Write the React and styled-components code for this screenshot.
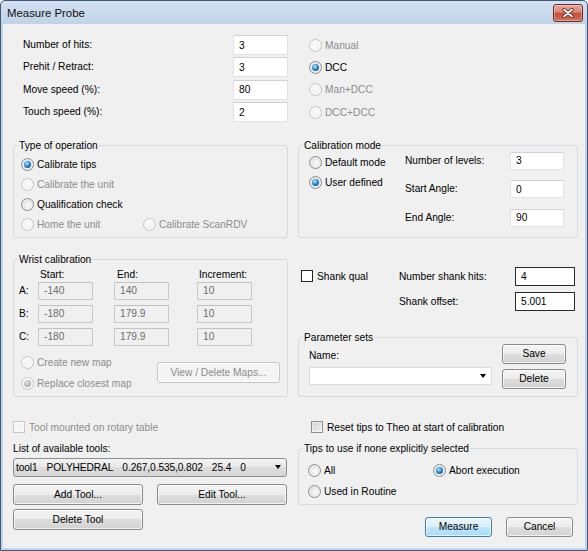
import React from 'react';
import styled, { createGlobalStyle } from 'styled-components';

const GlobalStyle = createGlobalStyle`
  html, body {
    margin: 0;
    padding: 0;
    background: #ffffff;
  }
  body {
    font-family: "Liberation Sans", Arial, sans-serif;
    font-size: 10.2px;
    color: #000;
  }
  * {
    box-sizing: border-box;
  }
`;

const Window = styled.div`
  width: 588px;
  height: 551px;
  display: flex;
  flex-direction: column;
  border: 1px solid #3f5775;
  border-radius: 5px 5px 0 0;
  background: linear-gradient(#d3e1f1, #bfd2e8 24px, #c3d5ea);
  overflow: hidden;
`;

const TitleBar = styled.div`
  height: 23px;
  flex: none;
  display: flex;
  align-items: center;
  justify-content: space-between;
  padding: 0 4px 0 6px;
`;

const Title = styled.span`
  font-size: 11.4px;
  color: #111;
`;

const CloseButton = styled.div`
  width: 30px;
  height: 18px;
  margin-top: 1px;
  border: 1px solid #6e2a22;
  border-radius: 3px;
  background: linear-gradient(#eaa99d, #d98474 45%, #c44e38 52%, #d3735a);
  box-shadow: inset 0 0 0 1px rgba(255, 255, 255, 0.35);
  display: flex;
  align-items: center;
  justify-content: center;
`;

const Body = styled.div`
  flex: 1;
  margin: 0 2px 2px;
  background: #f0f0f0;
  padding: 11px 0 0 10px;
`;

const TopSection = styled.div`
  display: grid;
  grid-template-columns: 210px 55px auto;
  grid-auto-rows: 20px;
  row-gap: 2.4px;
  align-items: center;
  padding-left: 10px;
`;

const ModeCell = styled.div`
  margin-left: 21px;
`;

const Label = styled.span`
  line-height: ${p => p.$lh || 14}px;
  white-space: nowrap;
  color: ${p => (p.$disabled ? '#8d8d8d' : '#000')};
  padding-left: ${p => p.$indent || 0}px;
`;

const Row = styled.div`
  display: grid;
  grid-template-columns: 275px 280px;
  column-gap: 10px;
  align-items: stretch;
  margin-top: ${p => p.$gap}px;
`;

const Group = styled.fieldset`
  margin: 0;
  padding: 0;
  min-width: 0;
  border: 1px solid #d5dbe0;
  border-radius: 3px;
  margin-top: ${p => p.$top || 0}px;
`;

const Legend = styled.legend`
  margin-left: 4px;
  padding: 0 1px;
  line-height: 12px;
`;

const TypeBody = styled.div`
  padding: 3px 0 2px 7px;
`;

const InlineRadios = styled.div`
  display: grid;
  grid-template-columns: ${p => p.$first}px auto;
`;

const CalibBody = styled.div`
  display: grid;
  grid-template-columns: 96px 105px 54px;
  grid-template-rows: repeat(3, 18px);
  row-gap: 10.5px;
  padding: 0 0 9px 10px;
`;

const RadioColumn = styled.div`
  grid-row: 1 / span 3;
  padding-top: 1px;
`;

const RadioRow = styled.div`
  display: flex;
  align-items: center;
  gap: 3px;
  height: ${p => p.$h || 20}px;
  white-space: nowrap;
  color: ${p => (p.$disabled ? '#8d8d8d' : '#000')};
`;

const RadioDot = styled.span`
  width: 13px;
  height: 13px;
  flex: none;
  border-radius: 50%;
  border: 1px solid ${p => (p.$disabled ? '#c5c5c5' : '#8a8b8c')};
  background: ${p =>
    p.$disabled
      ? 'radial-gradient(circle at 50% 40%, #fafafa, #ececec)'
      : 'radial-gradient(circle at 55% 55%, #f6f6f6 20%, #dadada 70%, #c9c9c9)'};
  box-shadow: inset 0 0 0 1px rgba(255, 255, 255, 0.6);
  display: flex;
  align-items: center;
  justify-content: center;
  &::after {
    content: '';
    display: ${p => (p.$checked ? 'block' : 'none')};
    width: 7px;
    height: 7px;
    border-radius: 50%;
    background: ${p =>
      p.$disabled
        ? 'radial-gradient(circle at 40% 35%, #e6e6e6, #a9a9a9 70%)'
        : 'radial-gradient(circle at 40% 35%, #b5e6fd, #2f8fd6 45%, #0a4a87 85%)'};
  }
`;

const CheckRow = styled.div`
  display: flex;
  align-items: center;
  gap: 4px;
  height: 13px;
  padding-left: ${p => p.$indent || 0}px;
  white-space: nowrap;
  color: ${p => (p.$disabled ? '#8d8d8d' : '#000')};
`;

const CheckBox = styled.span`
  width: 12px;
  height: 12px;
  flex: none;
  border: 1px solid
    ${p => (p.$variant === 'dark' ? '#222' : p.$variant === 'disabled' ? '#c8c8c8' : '#8e8f8f')};
  background: ${p =>
    p.$variant === 'dark'
      ? '#fff'
      : p.$variant === 'disabled'
      ? '#f4f4f4'
      : 'linear-gradient(135deg, #d2d2d2, #f0f0f0)'};
  box-shadow: ${p => (p.$variant === 'dark' ? 'none' : 'inset 0 0 0 1px rgba(255,255,255,0.5)')};
`;

const TextBox = styled.input`
  width: ${p => p.$w}px;
  height: ${p => p.$h}px;
  padding: 0 5px;
  margin: 0;
  font: inherit;
  outline: none;
  color: ${p => (p.$variant === 'disabled' ? '#6d6d6d' : '#000')};
  background: ${p => (p.$variant === 'disabled' ? '#f0f0f0' : '#fff')};
  border: 1px solid
    ${p => (p.$variant === 'dark' ? '#2a2a2a' : p.$variant === 'disabled' ? '#c9c9c9' : '#e0e3e8')};
  border-top-color: ${p =>
    p.$variant === 'dark' ? '#2a2a2a' : p.$variant === 'disabled' ? '#c2c2c2' : '#cfd2d8'};
`;

const Button = styled.button`
  width: ${p => p.$w}px;
  height: ${p => p.$h || 20}px;
  margin: 0;
  margin-left: ${p => p.$left || 0}px;
  margin-top: ${p => p.$top || 0}px;
  padding: 0;
  font: inherit;
  flex: none;
  border-radius: 3px;
  color: ${p => (p.$variant === 'disabled' ? '#8d8d8d' : '#000')};
  border: 1px solid
    ${p => (p.$variant === 'primary' ? '#3c7fb1' : p.$variant === 'disabled' ? '#c3c6c9' : '#8a8a8a')};
  background: ${p =>
    p.$variant === 'primary'
      ? 'linear-gradient(#eaf6fd, #d9f0fc 50%, #bee6fd 50%, #a9dbf6)'
      : p.$variant === 'disabled'
      ? '#f4f4f4'
      : 'linear-gradient(#f4f4f4, #ececec 50%, #dedede 50%, #d2d2d2)'};
  box-shadow: inset 0 0 0 1px rgba(255, 255, 255, 0.7);
`;

const Combo = styled.div`
  width: ${p => p.$w}px;
  height: ${p => p.$h}px;
  margin-top: ${p => p.$top || 0}px;
  display: flex;
  align-items: center;
  padding: 0 5px 0 2px;
  border-radius: ${p => (p.$raised ? 3 : 0)}px;
  border: 1px solid ${p => (p.$raised ? '#8d8d8d' : '#dcdcdc')};
  background: ${p => (p.$raised ? 'linear-gradient(#f3f3f3, #e8e8e8 50%, #dddddd 50%, #d6d6d6)' : '#fff')};
`;

const ComboText = styled.div`
  display: flex;
  gap: 9px;
  white-space: nowrap;
  letter-spacing: -0.1px;
`;

const Arrow = styled.span`
  margin-left: auto;
  width: 0;
  height: 0;
  border-left: 3.5px solid transparent;
  border-right: 3.5px solid transparent;
  border-top: 4px solid #000;
`;

const WristBody = styled.div`
  padding: 1px 0 2px 5px;
`;

const WristGrid = styled.div`
  display: grid;
  grid-template-columns: 19px 76px 83px 55px;
  grid-template-rows: 15px 23px 23px 18px;
  align-items: start;
`;

const MapSection = styled.div`
  display: flex;
  margin: 6px 0 0 2px;
`;

const MapRadios = styled.div`
  width: 136px;
`;

const ShankGrid = styled.div`
  display: grid;
  grid-template-columns: 98px 116px 60px;
  grid-template-rows: 19px 19px;
  row-gap: 6px;
  padding: 13px 0 0 3px;
  align-items: center;
`;

const RightStack = styled.div`
  display: flex;
  flex-direction: column;
`;

const ParamBody = styled.div`
  display: flex;
  gap: 10px;
  padding: 0 0 7px 10px;
`;

const Column = styled.div`
  display: flex;
  flex-direction: column;
  margin-top: ${p => p.$top || 0}px;
`;

const ButtonRow = styled.div`
  display: flex;
  justify-content: ${p => (p.$end ? 'flex-end' : 'flex-start')};
  gap: ${p => p.$gap || 0}px;
  margin-top: ${p => p.$top || 0}px;
  padding-right: ${p => p.$right || 0}px;
`;

const TipsBody = styled.div`
  display: grid;
  grid-template-columns: 125px auto;
  grid-auto-rows: 21px;
  padding: 5px 0 2px 9px;
`;

const Radio = ({ checked, disabled, h, children }) => (
  <RadioRow $disabled={disabled} $h={h}>
    <RadioDot $checked={checked} $disabled={disabled} />
    <span>{children}</span>
  </RadioRow>
);

const Check = ({ variant, indent, children }) => (
  <CheckRow $disabled={variant === 'disabled'} $indent={indent}>
    <CheckBox $variant={variant} />
    <span>{children}</span>
  </CheckRow>
);

const topFields = [
  ['Number of hits:', '3', 'Manual', false, true],
  ['Prehit / Retract:', '3', 'DCC', true, false],
  ['Move speed (%):', '80', 'Man+DCC', false, true],
  ['Touch speed (%):', '2', 'DCC+DCC', false, true],
];

const wristRows = [
  ['A:', '-140', '140', '10'],
  ['B:', '-180', '179.9', '10'],
  ['C:', '-180', '179.9', '10'],
];

const toolColumns = ['tool1', 'POLYHEDRAL', '0.267,0.535,0.802', '25.4', '0'];

const App = () => {
  return (
    <>
      <GlobalStyle />
      <Window>
        <TitleBar>
          <Title>Measure Probe</Title>
          <CloseButton>
            <svg width="12" height="10" viewBox="0 0 12 10">
              <path d="M2 1.5 L10 8.5 M10 1.5 L2 8.5" stroke="#4a1d17" strokeWidth="3.4" strokeLinecap="round" />
              <path d="M2 1.5 L10 8.5 M10 1.5 L2 8.5" stroke="#fff" strokeWidth="1.8" strokeLinecap="round" />
            </svg>
          </CloseButton>
        </TitleBar>
        <Body>
          <TopSection>
            {topFields.map(([label, value, mode, checked, disabled]) => (
              <React.Fragment key={label}>
                <Label>{label}</Label>
                <TextBox $w={55} $h={20} defaultValue={value} />
                <ModeCell>
                  <Radio checked={checked} disabled={disabled}>{mode}</Radio>
                </ModeCell>
              </React.Fragment>
            ))}
          </TopSection>

          <Row $gap={17.8}>
            <Group>
              <Legend>Type of operation</Legend>
              <TypeBody>
                <Radio checked>Calibrate tips</Radio>
                <Radio disabled>Calibrate the unit</Radio>
                <Radio>Qualification check</Radio>
                <InlineRadios $first={122}>
                  <Radio disabled>Home the unit</Radio>
                  <Radio disabled>Calibrate ScanRDV</Radio>
                </InlineRadios>
              </TypeBody>
            </Group>
            <Group>
              <Legend>Calibration mode</Legend>
              <CalibBody>
                <RadioColumn>
                  <Radio>Default mode</Radio>
                  <Radio checked>User defined</Radio>
                </RadioColumn>
                <Label $lh={18}>Number of levels:</Label>
                <TextBox $w={54} $h={18} defaultValue="3" />
                <Label $lh={18}>Start Angle:</Label>
                <TextBox $w={54} $h={18} defaultValue="0" />
                <Label $lh={18}>End Angle:</Label>
                <TextBox $w={54} $h={18} defaultValue="90" />
              </CalibBody>
            </Group>
          </Row>

          <Row $gap={16}>
            <Group>
              <Legend>Wrist calibration</Legend>
              <WristBody>
                <WristGrid>
                  <span />
                  <Label $lh={15} $indent={2}>Start:</Label>
                  <Label $lh={15} $indent={3}>End:</Label>
                  <Label $lh={15} $indent={2}>Increment:</Label>
                  {wristRows.map(([axis, start, end, inc]) => (
                    <React.Fragment key={axis}>
                      <Label $lh={18}>{axis}</Label>
                      <TextBox $w={55} $h={18} $variant="disabled" defaultValue={start} disabled />
                      <TextBox $w={55} $h={18} $variant="disabled" defaultValue={end} disabled />
                      <TextBox $w={55} $h={18} $variant="disabled" defaultValue={inc} disabled />
                    </React.Fragment>
                  ))}
                </WristGrid>
                <MapSection>
                  <MapRadios>
                    <Radio disabled h={21}>Create new map</Radio>
                    <Radio disabled checked h={21}>Replace closest map</Radio>
                  </MapRadios>
                  <Button $w={123} $h={21} $top={10} $variant="disabled">
                    View / Delete Maps...
                  </Button>
                </MapSection>
              </WristBody>
            </Group>
            <RightStack>
              <ShankGrid>
                <Check variant="dark">Shank qual</Check>
                <Label $lh={19}>Number shank hits:</Label>
                <TextBox $w={60} $h={19} $variant="dark" defaultValue="4" />
                <span />
                <Label $lh={19}>Shank offset:</Label>
                <TextBox $w={60} $h={19} $variant="dark" defaultValue="5.001" />
              </ShankGrid>
              <Group $top={21}>
                <Legend>Parameter sets</Legend>
                <ParamBody>
                  <Column $top={5}>
                    <Label>Name:</Label>
                    <Combo $w={183} $h={18} $top={4}>
                      <Arrow />
                    </Combo>
                  </Column>
                  <Column>
                    <Button $w={64}>Save</Button>
                    <Button $w={64} $top={5}>Delete</Button>
                  </Column>
                </ParamBody>
              </Group>
            </RightStack>
          </Row>

          <Row $gap={24}>
            <Column>
              <Check variant="disabled">Tool mounted on rotary table</Check>
              <Column $top={8}>
                <Label>List of available tools:</Label>
              </Column>
              <Combo $w={274} $h={19} $top={2} $raised>
                <ComboText>
                  {toolColumns.map(c => (
                    <span key={c}>{c}</span>
                  ))}
                </ComboText>
                <Arrow />
              </Combo>
              <ButtonRow $top={7}>
                <Button $w={130} $h={21}>Add Tool...</Button>
                <Button $w={130} $h={21} $left={14}>Edit Tool...</Button>
              </ButtonRow>
              <ButtonRow $top={4}>
                <Button $w={130} $h={21}>Delete Tool</Button>
              </ButtonRow>
            </Column>
            <Column>
              <Check indent={13}>Reset tips to Theo at start of calibration</Check>
              <Group $top={9}>
                <Legend>Tips to use if none explicitly selected</Legend>
                <TipsBody>
                  <Radio h={21}>All</Radio>
                  <Radio checked h={21}>Abort execution</Radio>
                  <Radio h={21}>Used in Routine</Radio>
                </TipsBody>
              </Group>
              <ButtonRow $end $gap={14} $top={12} $right={5}>
                <Button $w={67} $variant="primary">Measure</Button>
                <Button $w={67}>Cancel</Button>
              </ButtonRow>
            </Column>
          </Row>
        </Body>
      </Window>
    </>
  );
};

export default App;
